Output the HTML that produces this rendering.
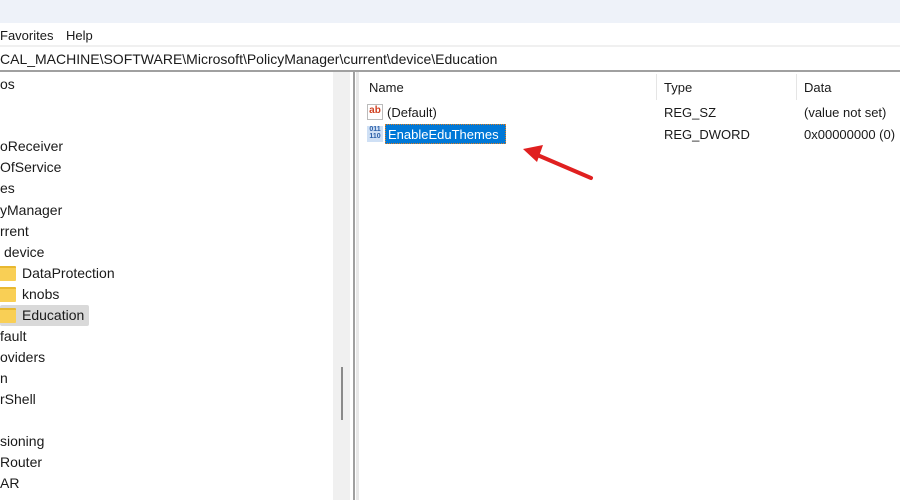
<!DOCTYPE html>
<html><head><style>
body{margin:0;width:900px;height:500px;overflow:hidden;background:#fff;font-family:"Liberation Sans",sans-serif;font-size:13px;color:#1a1a1a;position:relative}
.a{position:absolute;white-space:nowrap}
.t{font-size:14px}
.f{display:inline-block;width:22px;height:13px;background:#f9cf55;border-radius:1px;position:absolute;left:0;border-top:2px solid #e8b830}
</style></head><body>
<div class="a" style="left:0;top:0;width:900px;height:23px;background:#eef2f9"></div>
<div class="a" style="left:0;top:28px">Favorites</div>
<div class="a" style="left:66px;top:28px">Help</div>
<div class="a" style="left:0;top:45px;width:900px;height:2px;background:#f0f0f0"></div>
<div class="a t" style="left:0;top:51px">CAL_MACHINE\SOFTWARE\Microsoft\PolicyManager\current\device\Education</div>
<div class="a" style="left:0;top:70px;width:900px;height:2px;background:#a0a0a0"></div>
<div class="a" style="left:333px;top:72px;width:17px;height:428px;background:#f0f0f0"></div>
<div class="a" style="left:341px;top:367px;width:2px;height:53px;background:#8a8a8a"></div>
<div class="a" style="left:353px;top:72px;width:2px;height:428px;background:#a0a0a0"></div>
<div class="a" style="left:356px;top:72px;width:3px;height:428px;background:#e8e8e8"></div>
<div class="a t" style="left:0;top:76px">os</div>
<div class="a t" style="left:0;top:138px">oReceiver</div>
<div class="a t" style="left:0;top:159px">OfService</div>
<div class="a t" style="left:0;top:180px">es</div>
<div class="a t" style="left:0;top:202px">yManager</div>
<div class="a t" style="left:0;top:223px">rrent</div>
<div class="a t" style="left:4px;top:244px">device</div>
<div class="a" style="left:0;top:305px;width:89px;height:21px;background:#d9d9d9;border-radius:2px"></div>
<div class="a t" style="left:0;top:265px;width:200px;height:16px"><span class="f" style="left:-6px;top:1px"></span><span style="position:absolute;left:22px">DataProtection</span></div>
<div class="a t" style="left:0;top:286px;width:200px;height:16px"><span class="f" style="left:-6px;top:1px"></span><span style="position:absolute;left:22px">knobs</span></div>
<div class="a t" style="left:0;top:307px;width:200px;height:16px"><span class="f" style="left:-6px;top:1px"></span><span style="position:absolute;left:22px">Education</span></div>
<div class="a t" style="left:0;top:328px">fault</div>
<div class="a t" style="left:0;top:349px">oviders</div>
<div class="a t" style="left:0;top:370px">n</div>
<div class="a t" style="left:0;top:391px">rShell</div>
<div class="a t" style="left:0;top:433px">sioning</div>
<div class="a t" style="left:0;top:454px">Router</div>
<div class="a t" style="left:0;top:475px">AR</div>
<div class="a" style="left:656px;top:74px;width:1px;height:26px;background:#e5e5e5"></div>
<div class="a" style="left:796px;top:74px;width:1px;height:26px;background:#e5e5e5"></div>
<div class="a" style="left:369px;top:80px">Name</div>
<div class="a" style="left:664px;top:80px">Type</div>
<div class="a" style="left:804px;top:80px">Data</div>
<div class="a" style="left:367px;top:104px;width:16px;height:16px;border:1px solid #bbb;box-sizing:border-box;font-size:10px;font-weight:bold;color:#d04020;line-height:12px;text-align:center">ab</div>
<div class="a" style="left:387px;top:105px">(Default)</div>
<div class="a" style="left:664px;top:105px">REG_SZ</div>
<div class="a" style="left:804px;top:105px">(value not set)</div>
<div class="a" style="left:367px;top:126px;width:16px;height:16px;background:#cfe0f5;color:#2a5fa8;font-size:7px;line-height:7px;font-weight:bold;text-align:center">011<br>110</div>
<div class="a" style="left:385px;top:124px;width:121px;height:20px;background:#0078d7;border:1px dotted #e08020;box-sizing:border-box"></div>
<div class="a" style="left:388px;top:127px;color:#fff">EnableEduThemes</div>
<div class="a" style="left:664px;top:127px">REG_DWORD</div>
<div class="a" style="left:804px;top:127px">0x00000000 (0)</div>
<svg class="a" style="left:515px;top:140px" width="85" height="45"><line x1="76" y1="38" x2="20" y2="14" stroke="#e02020" stroke-width="4" stroke-linecap="round"/><polygon points="8,9 28,5 22,22" fill="#e02020"/></svg>
</body></html>
